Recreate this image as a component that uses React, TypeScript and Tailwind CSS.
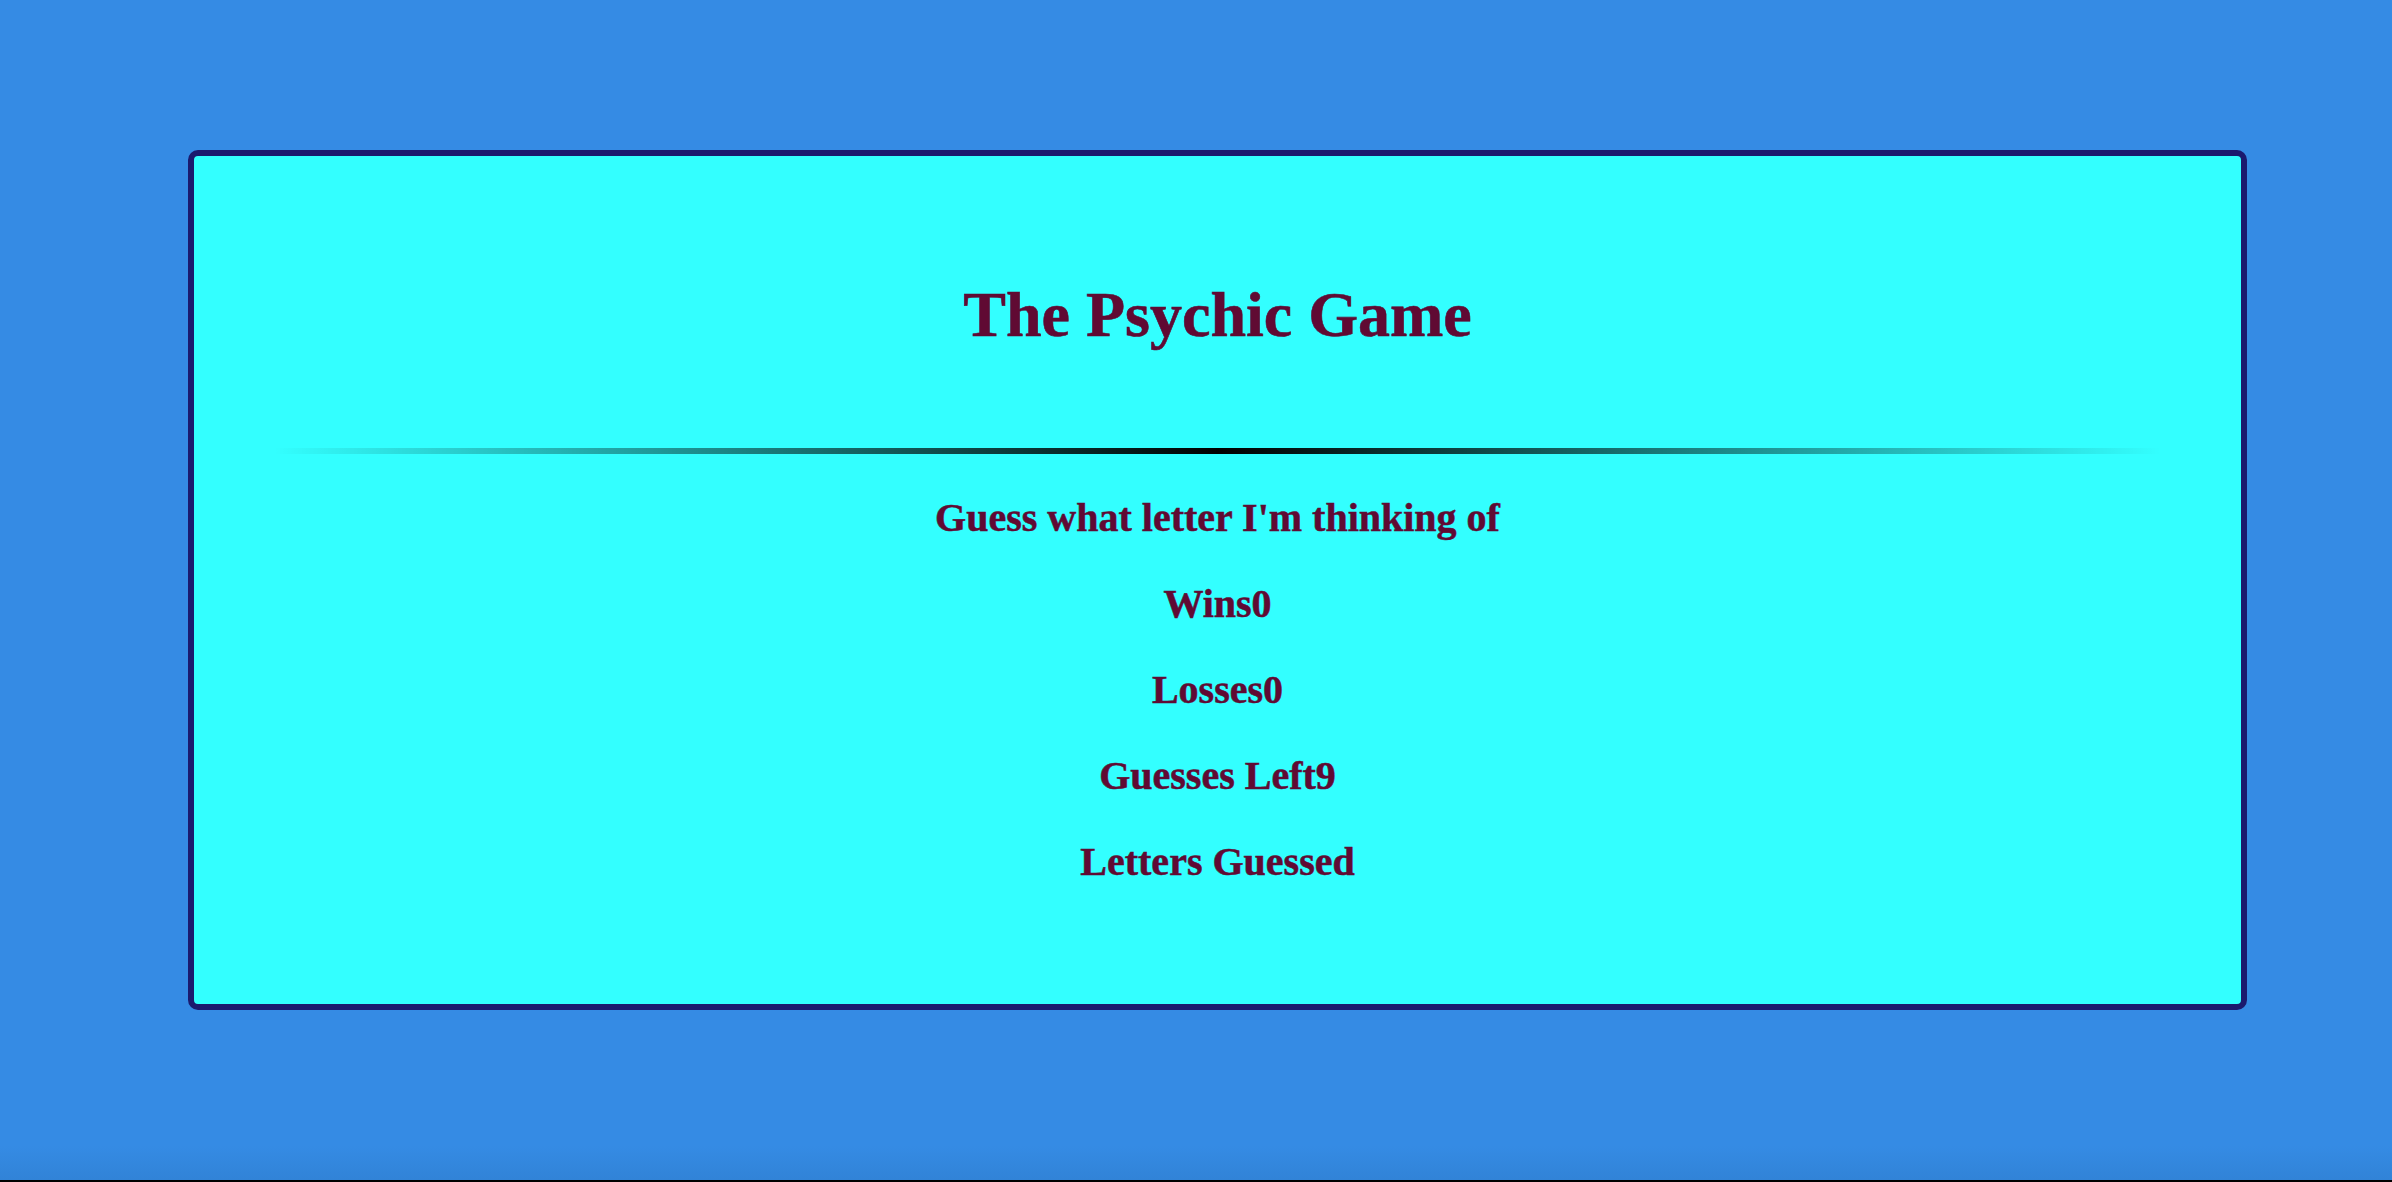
import React from "react";

export default function App() {
  const rows = ["Guess what letter I'm thinking of", "Wins0", "Losses0", "Guesses Left9", "Letters Guessed"];
  return (
    <div className="h-[1182px] w-full flex flex-col bg-[#358be4] overflow-hidden font-['Liberation_Serif','Times_New_Roman',serif]">
      <div className="mt-[150px] ml-[188px] w-[2059px] h-[860px] shrink-0 border-[6px] border-[#1b1a6e] rounded-[10px] bg-[#33ffff] flex flex-col items-center pt-[122px] px-[80px]">
        <h1 className="text-[64px] leading-[74px] font-bold text-[#600a33] text-center [-webkit-text-stroke:0.6px_#600a33]">The Psychic Game</h1>
        <div className="mt-[96px] h-[6px] w-full bg-gradient-to-r from-transparent via-black to-transparent" />
        <div className="mt-[41px] flex flex-col items-center gap-[40px]">
          {rows.map((r) => (
            <h3 key={r} className="text-[40px] leading-[46px] font-bold text-[#600a33] text-center [-webkit-text-stroke:0.5px_#600a33]">{r}</h3>
          ))}
        </div>
      </div>
      <div className="mt-auto h-[34px] shrink-0 bg-gradient-to-b from-[#358be4] to-[#3183d7]" />
      <div className="h-[2px] shrink-0 bg-black" />
    </div>
  );
}
